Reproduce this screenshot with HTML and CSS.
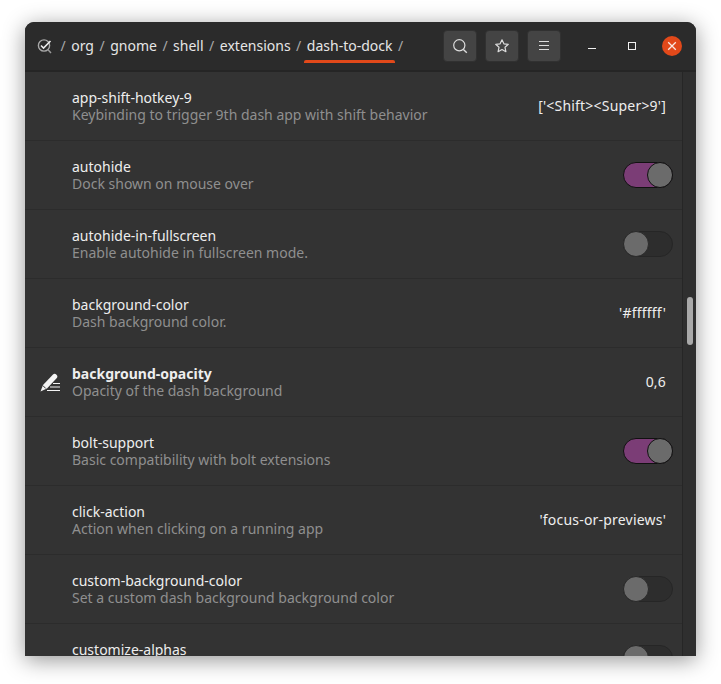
FILE: index.html
```html
<!DOCTYPE html>
<html lang="en">
<head>
<meta charset="utf-8">
<title>dconf Editor</title>
<link rel="stylesheet" href="styles.css">
</head>
<body>
<div class="window">
  <header class="header">
    <nav class="crumbs">
      <svg class="logo" width="16" height="16" viewBox="0 0 16 16" fill="none">
        <circle cx="7" cy="7.500" r="5.600" stroke="#a8a8a8" stroke-width="1.400"/>
        <path d="M4 7.500l2.500 2.500L13.500 3" stroke="#ececec" stroke-width="1.600"/>
        <path d="M10.800 11.500l3.200 3.400" stroke="#9a9a9a" stroke-width="1.500"/>
      </svg>
      <span class="sep">/</span><span class="crumb">org</span>
      <span class="sep">/</span><span class="crumb">gnome</span>
      <span class="sep">/</span><span class="crumb">shell</span>
      <span class="sep">/</span><span class="crumb">extensions</span>
      <span class="sep">/</span><span class="crumb current">dash-to-dock</span>
      <span class="sep">/</span>
    </nav>
    <div class="tools">
      <button class="tool" aria-label="Search">
        <svg width="16" height="16" viewBox="0 0 16 16" fill="none" stroke="#dcdcdc" stroke-width="1.200"><circle cx="7.300" cy="7.300" r="5.600"/><path d="M11.400 11.400l3.400 3.400" stroke-width="1.400"/></svg>
      </button>
      <button class="tool" aria-label="Bookmarks">
        <svg width="16" height="16" viewBox="0 0 16 16" fill="none" stroke="#dcdcdc" stroke-width="1.200" stroke-linejoin="round"><path d="M8 1.800l1.900 4 4.400.5-3.300 3 .9 4.400L8 11.500l-3.900 2.200.9-4.400-3.300-3 4.400-.5z"/></svg>
      </button>
      <button class="tool" aria-label="Menu">
        <svg width="16" height="16" viewBox="0 0 16 16" stroke="#dcdcdc" stroke-width="1"><path d="M3 3.500h10M3 7.500h10M3 11.500h10"/></svg>
      </button>
    </div>
    <div class="wm">
      <span class="wm-btn"><svg width="16" height="16" viewBox="0 0 16 16"><path d="M4 10.500h8" stroke="#f0f0f0" stroke-width="1"/></svg></span>
      <span class="wm-btn"><svg width="16" height="16" viewBox="0 0 16 16" fill="none"><rect x="4.500" y="4.500" width="7" height="7" stroke="#f0f0f0" stroke-width="1"/></svg></span>
      <span class="wm-btn close"><svg width="20" height="20" viewBox="0 0 20 20"><path d="M6.200 6.200l7.600 7.600M13.800 6.200l-7.600 7.600" stroke="#fbe9e2" stroke-width="1.300"/></svg></span>
    </div>
  </header>
  <div class="body">
    <main class="list">
      <div class="row">
        <div class="text"><div class="name">app-shift-hotkey-9</div><div class="desc">Keybinding to trigger 9th dash app with shift behavior</div></div>
        <div class="value">['&lt;Shift&gt;&lt;Super&gt;9']</div>
      </div>
      <div class="row">
        <div class="text"><div class="name">autohide</div><div class="desc">Dock shown on mouse over</div></div>
        <div class="switch on"><span class="knob"></span></div>
      </div>
      <div class="row">
        <div class="text"><div class="name">autohide-in-fullscreen</div><div class="desc">Enable autohide in fullscreen mode.</div></div>
        <div class="switch"><span class="knob"></span></div>
      </div>
      <div class="row">
        <div class="text"><div class="name">background-color</div><div class="desc">Dash background color.</div></div>
        <div class="value">'#ffffff'</div>
      </div>
      <div class="row">
        <svg class="edit" width="22" height="20" viewBox="0 0 22 20"><path d="M1.500 19.500L4 13 14 2.500c1-1 2.500-.8 3.500.2s1.200 2.300.3 3.300L8 16.500z" fill="#f4f4f4"/><path d="M3.800 13.500l3 3" stroke="#333" stroke-width="1"/><path d="M8 18.500h13M11 15h10M14 11.500h7" stroke="#f4f4f4" stroke-width="1.200"/></svg>
        <div class="text"><div class="name strong">background-opacity</div><div class="desc">Opacity of the dash background</div></div>
        <div class="value">0,6</div>
      </div>
      <div class="row">
        <div class="text"><div class="name">bolt-support</div><div class="desc">Basic compatibility with bolt extensions</div></div>
        <div class="switch on"><span class="knob"></span></div>
      </div>
      <div class="row">
        <div class="text"><div class="name">click-action</div><div class="desc">Action when clicking on a running app</div></div>
        <div class="value">'focus-or-previews'</div>
      </div>
      <div class="row">
        <div class="text"><div class="name">custom-background-color</div><div class="desc">Set a custom dash background background color</div></div>
        <div class="switch"><span class="knob"></span></div>
      </div>
      <div class="row">
        <div class="text"><div class="name">customize-alphas</div><div class="desc"></div></div>
        <div class="switch"><span class="knob"></span></div>
      </div>
    </main>
    <aside class="scroll"><div class="thumb"></div></aside>
  </div>
</div>
</body>
</html>
```
FILE: styles.css
```css
* { box-sizing: border-box; }
html, body { margin: 0; height: 100%; background: #fff; overflow: hidden; }
body { padding: 22px 25px 0; font-family: "Noto Sans", "Open Sans", sans-serif; font-size: 14px; color: #f2f2f2; }
.window { width: 671px; height: 634px; background: #333; border-radius: 9px 9px 0 0; box-shadow: 0 4px 22px rgba(0,0,0,.42); overflow: hidden; display: flex; flex-direction: column; }
.header { flex: none; height: 50px; background: #2b2b2b; border-bottom: 2px solid #252525; display: flex; align-items: center; }
.crumbs { display: flex; align-items: center; gap: 5.500px; padding: 0 0 2px 12px; width: 418px; font-size: 14px; height: 100%; }
.logo { flex: none; margin: 2px 2px 0 0; }
.sep { color: #a8a8a8; }
.crumb { color: #e6e6e6; position: relative; }
.current::after { content: ""; position: absolute; left: -3px; right: -3px; bottom: -8px; height: 3px; background: #e2491a; border-radius: 2px 2px 0 0; }
.tools { display: flex; gap: 8px; }
.tool { width: 34px; height: 32px; padding: 0; border: 1px solid #313131; border-radius: 4px; background: #444; display: flex; align-items: center; justify-content: center; }
.wm { display: flex; align-items: center; margin-left: 21px; gap: 20px; }
.wm-btn { width: 20px; height: 20px; display: flex; align-items: center; justify-content: center; }
.close { background: #e2491a; border-radius: 50%; }
.body { flex: 1; min-height: 0; display: flex; }
.list { flex: 1; min-width: 0; overflow: hidden; }
.row { position: relative; height: 69px; padding: 0 9px 0 47px; border-bottom: 1px solid #2c2c2c; display: flex; align-items: center; justify-content: space-between; }
.text { min-width: 0; line-height: 17px; }
.name { color: #eee; }
.strong { font-weight: 700; }
.desc { color: #8f8f8f; min-height: 17px; }
.value { color: #eee; padding-right: 7px; margin-bottom: 2px; letter-spacing: .2px; }
.edit { position: absolute; left: 14px; top: 24px; }
.switch { width: 50px; height: 26px; border-radius: 13px; background: #2d2d2d; border: 1px solid #262626; display: flex; justify-content: flex-start; }
.switch.on { background: #7b3d76; border-color: #111; justify-content: flex-end; }
.knob { width: 26px; height: 26px; margin: -1px; border-radius: 50%; background: #6b6b6b; border: 1px solid #2a2a2a; }
.switch.on .knob { border-color: #111; }
.scroll { flex: none; width: 14px; background: #2f2f2f; border-left: 1px solid #262626; padding: 225px 0 0 4px; }
.thumb { width: 6px; height: 48px; border-radius: 3px; background: #a9a9a9; }
```
